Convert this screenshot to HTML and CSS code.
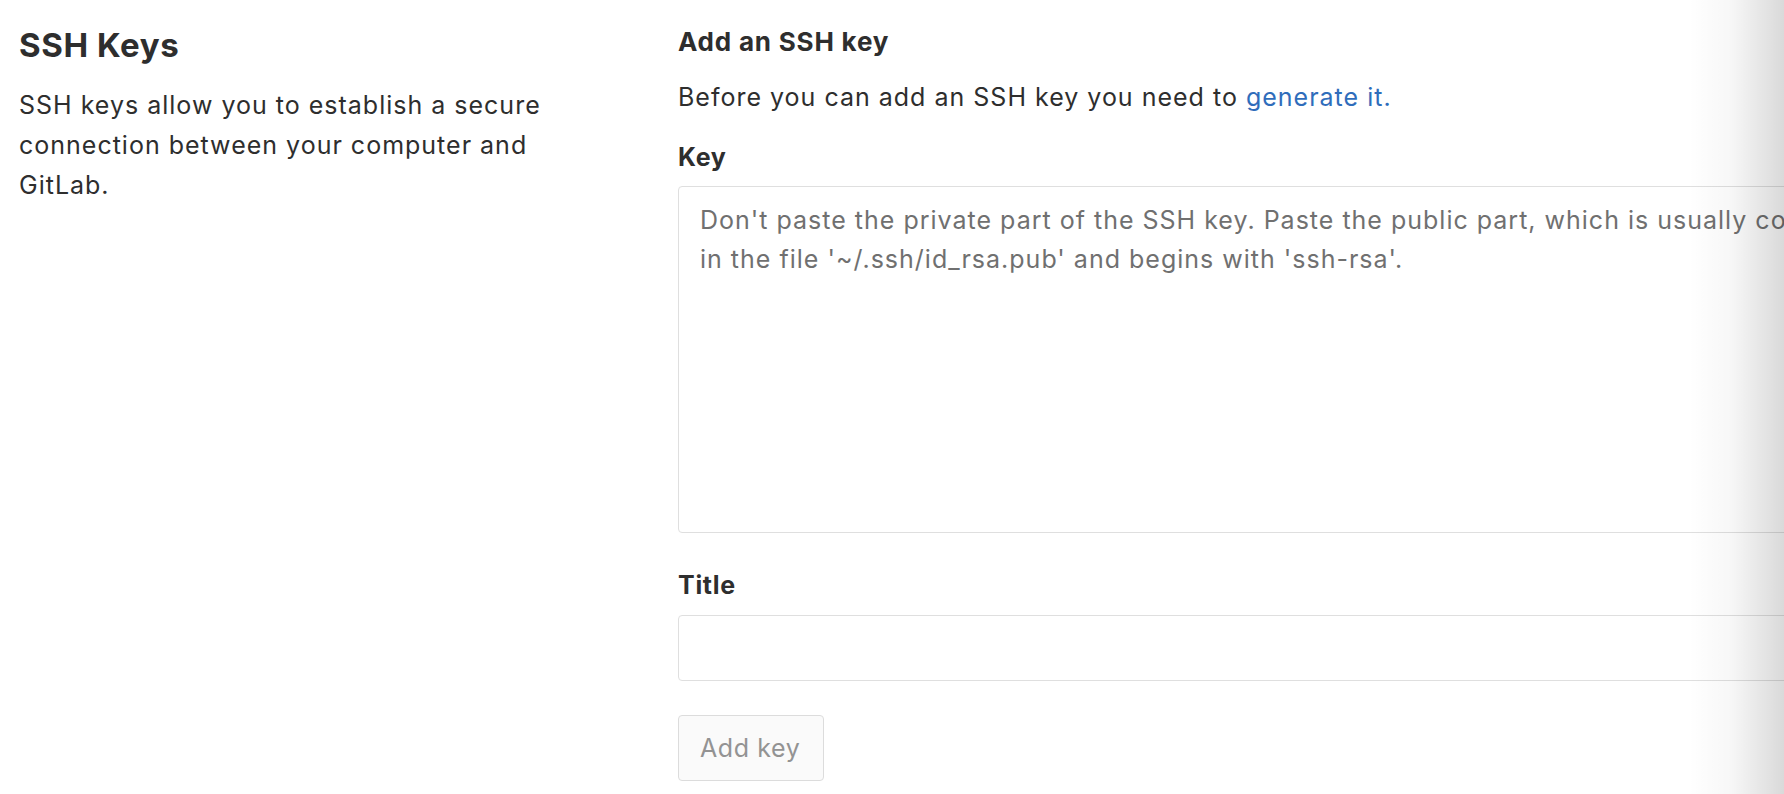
FILE: index.html
```html
<!DOCTYPE html>
<html lang="en">
<head>
<meta charset="utf-8">
<title>SSH Keys</title>
<link rel="stylesheet" href="styles.css">
</head>
<body>
<div class="page">
  <section class="settings">
    <aside class="intro">
      <h4 class="intro-title">SSH Keys</h4>
      <p class="intro-text">SSH keys allow you to establish a secure connection between your computer and GitLab.</p>
    </aside>
    <div class="content">
      <h5 class="form-title">Add an SSH key</h5>
      <p class="form-help">Before you can add an SSH key you need to <a class="link" href="#">generate it.</a></p>
      <form class="key-form">
        <label class="field-label" for="key">Key</label>
        <textarea id="key" class="field key-area" placeholder="Don't paste the private part of the SSH key. Paste the public part, which is usually contained&#10;in the file '~/.ssh/id_rsa.pub' and begins with 'ssh-rsa'."></textarea>
        <label class="field-label title-label" for="title">Title</label>
        <input id="title" class="field title-input" type="text">
        <div class="actions">
          <button type="button" class="btn" disabled>Add key</button>
        </div>
      </form>
    </div>
  </section>
  <div class="edge-fade"></div>
</div>
</body>
</html>
```
FILE: styles.css
```css
html, body {
  margin: 0;
  padding: 0;
  background: #ffffff;
  overflow: hidden;
}

body {
  font-family: Inter, "Noto Sans", "Liberation Sans", sans-serif;
  color: #2e2e2e;
  font-size: 25px;
  line-height: 40px;
  letter-spacing: 1px;
}

.page {
  position: relative;
  width: 1784px;
  height: 794px;
  overflow: hidden;
}

.settings {
  display: grid;
  grid-template-columns: 659px 1300px;
  padding-left: 19px;
}

.intro-title {
  margin: 25px 0 0;
  font-size: 33px;
  line-height: 40px;
  font-weight: 700;
  letter-spacing: 0.6px;
}

.intro-text {
  margin: 20px 0 0;
  width: 560px;
}

.content {
  display: flex;
  flex-direction: column;
}

.form-title {
  margin: 22px 0 0;
  font-size: 26px;
  line-height: 40px;
  font-weight: 700;
  letter-spacing: 0.8px;
}

.form-help {
  margin: 15px 0 0;
}

.link {
  color: #2f6dbb;
  text-decoration: none;
}

.key-form {
  display: flex;
  flex-direction: column;
}

.field-label {
  margin-top: 20px;
  font-weight: 700;
  line-height: 40px;
  letter-spacing: 0.7px;
}

.title-label {
  margin-top: 32px;
}

.field {
  box-sizing: border-box;
  width: 1300px;
  border: 1px solid #dfdfdf;
  border-radius: 4px;
  background: #fff;
  font-family: inherit;
  font-size: 25px;
  line-height: 39px;
  letter-spacing: 1px;
  color: #2e2e2e;
  outline: none;
}

.key-area {
  margin-top: 9px;
  height: 347px;
  padding: 14px 21px;
  resize: none;
}

.key-area::placeholder {
  color: #707070;
  opacity: 1;
}

.title-input {
  margin-top: 10px;
  height: 66px;
  padding: 0 21px;
}

.actions {
  margin-top: 34px;
}

.btn {
  box-sizing: border-box;
  width: 146px;
  height: 66px;
  padding: 0 21px;
  text-align: left;
  border: 1px solid #dcdcdc;
  border-radius: 4px;
  background: #fafafa;
  color: #939393;
  font-family: inherit;
  font-size: 25px;
  letter-spacing: 0.6px;
}

.edge-fade {
  position: absolute;
  top: 0;
  right: 0;
  width: 96px;
  height: 100%;
  background: linear-gradient(to right, rgba(0, 0, 0, 0) 0%, rgba(0, 0, 0, 0.03) 45%, rgba(0, 0, 0, 0.15) 100%);
  pointer-events: none;
}
```
